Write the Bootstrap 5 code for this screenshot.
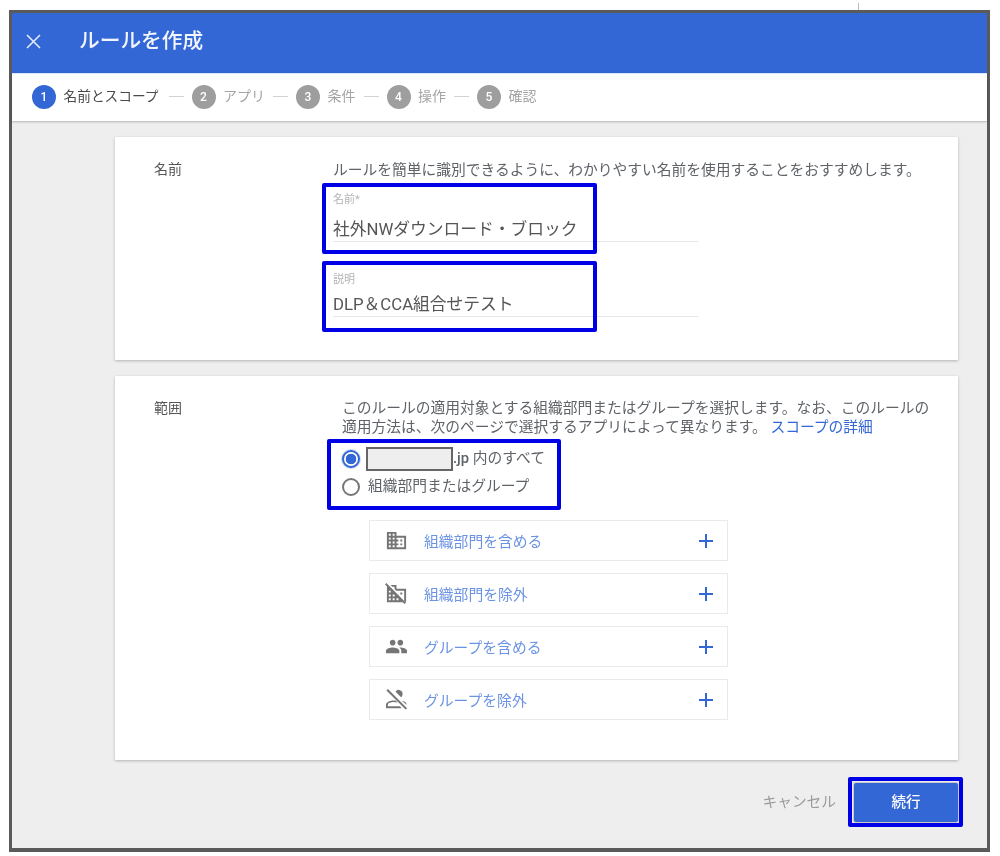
<!DOCTYPE html>
<html lang="ja">
<head>
<meta charset="utf-8">
<title>ルールを作成</title>
<link href="https://cdn.jsdelivr.net/npm/bootstrap@5.3.0/dist/css/bootstrap.min.css" rel="stylesheet">
<style>
html,body{height:856px;overflow:hidden;background:#fff}
body{font-family:Roboto,"Noto Sans CJK JP",sans-serif;color:#5f6368;position:relative}
.tick{position:absolute;left:858px;top:3px;width:1px;height:7px;background:#bbb}
.frame{margin:10px 0 0 9px;width:981px;height:842px;border:3px solid #5a5a5a;border-bottom-width:4px;background:#eee;filter:blur(.6px)}
.head{height:60px;background:#3367d6;color:#fff;padding:0 0 4px 14px;gap:38px}
.head h1{font-size:20.7px;font-weight:500;margin:0;color:#f2f5fd}
.steps{height:48px;background:#fff;padding:0 0 2px 20px;box-shadow:0 1px 2px rgba(0,0,0,.25);border-top:1px solid #dfe6f7}
.num{width:24px;height:24px;border-radius:50%;background:#9e9e9e;color:#fff;font-size:12px;font-weight:500;margin-right:7.5px}
.num.on{background:#3367d6}
.dash{width:15px;height:1px;background:#d2d2d2;margin:0 8px}
.step{color:#a5a5a5;font-size:14px}
.step.on{color:#4a4a4a;font-size:13.7px}
.step.on+.dash{margin-left:10px}
.main{padding:16px 29px 0 103px}
.pane{border:0;border-radius:1px;box-shadow:0 1px 3px rgba(0,0,0,.25);display:flex;flex-direction:row}
.pane1{height:223px;margin-bottom:16px}
.pane2{height:384px}
.cap{width:179px;padding:22px 0 0 39px;font-size:14px;color:#555;flex:none}
.body1{padding:23px 0 0 39px;flex:1;font-size:14.75px;line-height:20px}
.body2{padding:23px 0 0 48px;flex:1;font-size:14.75px;line-height:19px}
.help{white-space:nowrap}
.field{position:relative;width:365px;border-bottom:1px solid #e6e6e6}
.f1{height:59px;margin-top:3px}
.f2{height:57px;margin-top:18px}
.field small{display:block;font-size:11px;color:#b4b4b4;line-height:14px}
.f1 small{padding-top:10px}
.f2 small{padding-top:13px}
.field .val{display:block;font-size:16.75px;line-height:24px;color:#555;white-space:nowrap}
.f1 .val{margin-top:10px}
.f2 .val{margin-top:5px}
.mk{position:absolute;border:4px solid #0000e6;border-radius:2px;pointer-events:none}
.mk1{left:-11px;top:0;width:275px;height:71px}
.mk2{left:-11px;top:1px;width:275px;height:71px}
.scope-link{color:#3367d6;text-decoration:none}
.radios{position:relative;margin-top:8px;height:56px}
.rline{height:28px;gap:8px}
.rline .form-check-input{float:none;margin:0;width:18px;height:18px;flex:none;border:2px solid #777;background:#fff;box-shadow:none}
.rline .form-check-input:checked{border-color:#3367d6;background-image:radial-gradient(circle,#3367d6 0 5px,#fff 5.6px);box-shadow:0 0 0 1px rgba(51,103,214,.25)}
.rline label{white-space:nowrap}
.rline+.rline label{margin-top:-2px}
.redact{display:inline-block;width:87px;height:24px;background:#eee;border:2px solid #666;vertical-align:middle;margin-left:-2px}
.mk3{left:-15px;top:-6px;width:234px;height:71px}
.adds{width:359px;margin:19px 0 0 27px;gap:12px}
.add{height:41px;border:1px solid #eaeaea;background:#fff;padding:0 12px 0 15px;border-radius:0;font-size:14.8px;color:#6b93e4}
.add span{padding-top:3px}
.add svg.ic{width:23px;height:23px;fill:#757575;margin-right:16px;flex:none}
.add svg.pl{width:18px;height:18px;margin-left:auto;fill:#3367d6}
.foot{padding-top:23px;gap:18px}
.cancel{font-size:14.7px;color:#9b9b9b;padding:0;border:0;background:none}
.go{width:104px;height:39px;background:#3367d6;border:0;border-radius:2px;color:#fff;font-size:14.5px;font-weight:500;padding:0;box-shadow:0 0 0 1px #c9c9c9}
.gobox{position:relative}
.mk4{left:-6px;top:-6px;width:115px;height:50px}
</style>
</head>
<body>
<div class="tick"></div>
<div class="frame d-flex flex-column">
  <div class="head d-flex align-items-center">
    <svg width="15" height="15" viewBox="0 0 15 15" fill="none" stroke="#e8eefb" stroke-width="1.5"><path d="M1 1l13 13M14 1L1 14"/></svg>
    <h1>ルールを作成</h1>
  </div>
  <div class="steps d-flex align-items-center">
    <span class="num on d-flex align-items-center justify-content-center">1</span><span class="step on">名前とスコープ</span><span class="dash"></span>
    <span class="num d-flex align-items-center justify-content-center">2</span><span class="step">アプリ</span><span class="dash"></span>
    <span class="num d-flex align-items-center justify-content-center">3</span><span class="step">条件</span><span class="dash"></span>
    <span class="num d-flex align-items-center justify-content-center">4</span><span class="step">操作</span><span class="dash"></span>
    <span class="num d-flex align-items-center justify-content-center">5</span><span class="step">確認</span>
  </div>
  <div class="main">
    <div class="card pane pane1">
      <div class="cap">名前</div>
      <div class="body1">
        <div class="help">ルールを簡単に識別できるように、わかりやすい名前を使用することをおすすめします。</div>
        <div class="field f1"><div class="mk mk1"></div><small>名前*</small><span class="val">社外NWダウンロード・ブロック</span></div>
        <div class="field f2"><div class="mk mk2"></div><small>説明</small><span class="val">DLP＆CCA組合せテスト</span></div>
      </div>
    </div>
    <div class="card pane pane2">
      <div class="cap">範囲</div>
      <div class="body2">
        <div>このルールの適用対象とする組織部門またはグループを選択します。なお、このルールの<br>適用方法は、次のページで選択するアプリによって異なります。 <a class="scope-link" href="#">スコープの詳細</a></div>
        <div class="radios">
          <div class="mk mk3"></div>
          <div class="rline d-flex align-items-center"><input class="form-check-input" type="radio" name="sc" id="r1" checked><label for="r1"><span class="redact"></span><b class="fw-medium">.jp</b> 内のすべて</label></div>
          <div class="rline d-flex align-items-center"><input class="form-check-input" type="radio" name="sc" id="r2"><label for="r2">組織部門またはグループ</label></div>
        </div>
        <div class="adds d-flex flex-column">
          <div class="add d-flex align-items-center">
            <svg class="ic" viewBox="0 0 24 24"><path d="M12 7V3H2v18h20V7H12zM6 19H4v-2h2v2zm0-4H4v-2h2v2zm0-4H4V9h2v2zm0-4H4V5h2v2zm4 12H8v-2h2v2zm0-4H8v-2h2v2zm0-4H8V9h2v2zm0-4H8V5h2v2zm10 12h-8v-2h2v-2h-2v-2h2v-2h-2V9h8v10zm-2-8h-2v2h2v-2zm0 4h-2v2h2v-2z"/></svg>
            <span>組織部門を含める</span>
            <svg class="pl" viewBox="0 0 18 18"><path d="M8 2h2v6h6v2h-6v6H8v-6H2V8h6z"/></svg>
          </div>
          <div class="add d-flex align-items-center">
            <svg class="ic" viewBox="0 0 24 24"><path d="M1.41 1.13L0 2.54l2 2V21h16.46l2 2 1.41-1.41zM6 19H4v-2h2v2zm0-4H4v-2h2v2zm0-4H4V9h2v2zm4 8H8v-2h2v2zm0-4H8v-2h2v2zm4 4h-2v-2h2v2zM8 5h2v2h-.34L12 9.34V9h8v10h-.34l2 2H22V7H12V3H5.66L8 5.34zm8 6h2v2h-2z"/></svg>
            <span>組織部門を除外</span>
            <svg class="pl" viewBox="0 0 18 18"><path d="M8 2h2v6h6v2h-6v6H8v-6H2V8h6z"/></svg>
          </div>
          <div class="add d-flex align-items-center">
            <svg class="ic" viewBox="0 0 24 24"><path d="M16 11c1.66 0 2.99-1.34 2.99-3S17.66 5 16 5c-1.66 0-3 1.34-3 3s1.34 3 3 3zm-8 0c1.66 0 2.99-1.34 2.99-3S9.66 5 8 5C6.34 5 5 6.34 5 8s1.34 3 3 3zm0 2c-2.33 0-7 1.17-7 3.5V19h14v-2.5c0-2.33-4.67-3.5-7-3.5zm8 0c-.29 0-.62.02-.97.05 1.16.84 1.97 1.97 1.97 3.45V19h6v-2.5c0-2.33-4.67-3.5-7-3.5z"/></svg>
            <span>グループを含める</span>
            <svg class="pl" viewBox="0 0 18 18"><path d="M8 2h2v6h6v2h-6v6H8v-6H2V8h6z"/></svg>
          </div>
          <div class="add d-flex align-items-center">
            <svg class="ic" viewBox="0 0 24 24"><path d="M1.5 2.5L3 1l20 20-1.500 1.500zM11 3.800a4 4 0 0 1 7.300 2.700c0 1.300-.6 2.400-1.500 3.100zM6 4.500l1.700 1.700-.1.600c-.8-.5-1.300-1.300-1.600-2.300zM17.500 13.300c2.600.5 5 1.600 5 3.700v.5zM9 13c.8 0 1.600.1 2.400.2l1.800 1.800c-1.300-.3-2.900-.5-4.200-.5-2.500 0-6 1.200-6 2.500V19h12.500l2 2H1v-3.500C1 14.500 6 13 9 13z"/></svg>
            <span>グループを除外</span>
            <svg class="pl" viewBox="0 0 18 18"><path d="M8 2h2v6h6v2h-6v6H8v-6H2V8h6z"/></svg>
          </div>
        </div>
      </div>
    </div>
    <div class="foot d-flex justify-content-end align-items-center">
      <button class="btn cancel" type="button">キャンセル</button>
      <div class="gobox"><button class="btn go" type="button">続行</button><div class="mk mk4"></div></div>
    </div>
  </div>
</div>
<script src="https://cdn.jsdelivr.net/npm/bootstrap@5.3.0/dist/js/bootstrap.bundle.min.js"></script>
</body>
</html>
